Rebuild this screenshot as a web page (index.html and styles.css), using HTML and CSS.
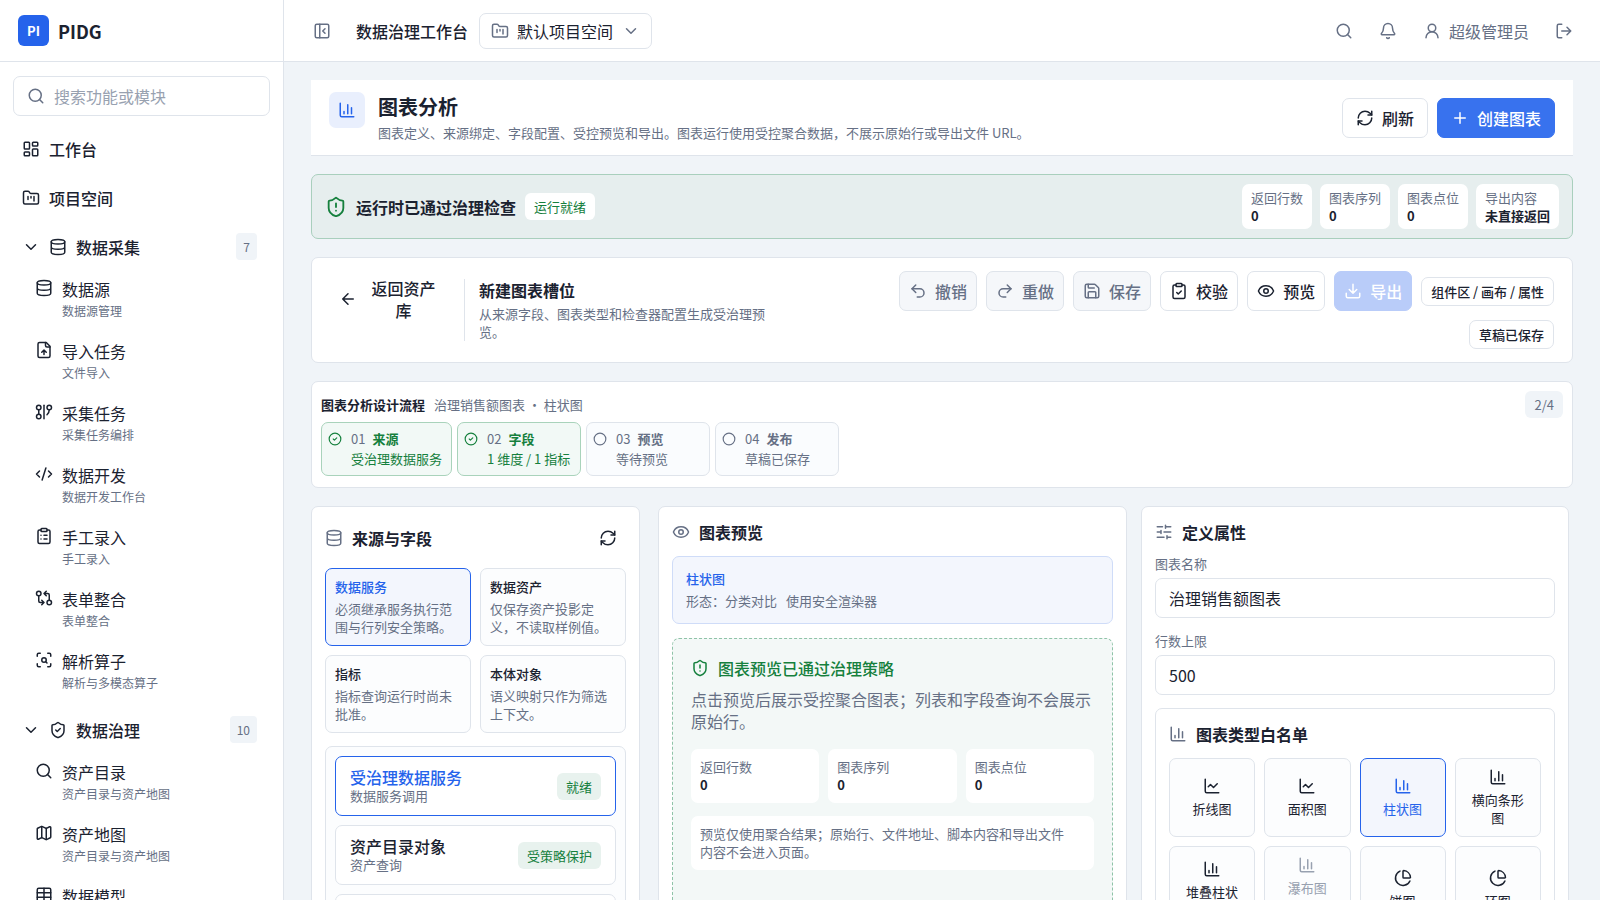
FILE: index.html
```
<!DOCTYPE html>
<html lang="zh-CN">
<head>
<meta charset="utf-8">
<title>图表分析 - PIDG</title>
<link rel="stylesheet" href="styles.css">
</head>
<body>
	<!-- 图标 -->
	<svg class="sprite" aria-hidden="true">
		<symbol id="i-dashboard" viewBox="0 0 24 24"><rect x="3" y="3" width="7" height="9" rx="1"/><rect x="14" y="3" width="7" height="5" rx="1"/><rect x="14" y="12" width="7" height="9" rx="1"/><rect x="3" y="16" width="7" height="5" rx="1"/></symbol>
		<symbol id="i-folder" viewBox="0 0 24 24"><path d="M4 20h16a2 2 0 0 0 2-2V8a2 2 0 0 0-2-2h-7.93a2 2 0 0 1-1.66-.9l-.82-1.2A2 2 0 0 0 7.93 3H4a2 2 0 0 0-2 2v13c0 1.1.9 2 2 2Z"/><path d="M8 10v4M12 10v2M16 10v6"/></symbol>
		<symbol id="i-database" viewBox="0 0 24 24"><ellipse cx="12" cy="5" rx="9" ry="3"/><path d="M3 5v14a9 3 0 0 0 18 0V5M3 12a9 3 0 0 0 18 0"/></symbol>
		<symbol id="i-file-up" viewBox="0 0 24 24"><path d="M15 2H6a2 2 0 0 0-2 2v16a2 2 0 0 0 2 2h12a2 2 0 0 0 2-2V7Z"/><path d="M14 2v4a2 2 0 0 0 2 2h4M12 12v6M15 15l-3-3-3 3"/></symbol>
		<symbol id="i-graph" viewBox="0 0 24 24"><circle cx="5" cy="6" r="3"/><path d="M5 9v6"/><circle cx="5" cy="18" r="3"/><path d="M12 3v18"/><circle cx="19" cy="6" r="3"/><path d="M16 15.7A9 9 0 0 0 19 9"/></symbol>
		<symbol id="i-code" viewBox="0 0 24 24"><path d="m18 16 4-4-4-4M6 8l-4 4 4 4M14.5 4l-5 16"/></symbol>
		<symbol id="i-clip-list" viewBox="0 0 24 24"><rect x="8" y="2" width="8" height="4" rx="1"/><path d="M16 4h2a2 2 0 0 1 2 2v14a2 2 0 0 1-2 2H6a2 2 0 0 1-2-2V6a2 2 0 0 1 2-2h2M12 11h4M12 16h4M8 11h.01M8 16h.01"/></symbol>
		<symbol id="i-clip-check" viewBox="0 0 24 24"><rect x="8" y="2" width="8" height="4" rx="1"/><path d="M16 4h2a2 2 0 0 1 2 2v14a2 2 0 0 1-2 2H6a2 2 0 0 1-2-2V6a2 2 0 0 1 2-2h2M9 14l2 2 4-4"/></symbol>
		<symbol id="i-compare" viewBox="0 0 24 24"><circle cx="5" cy="6" r="3"/><path d="M12 6h5a2 2 0 0 1 2 2v7M15 9l-3-3 3-3"/><circle cx="19" cy="18" r="3"/><path d="M12 18H7a2 2 0 0 1-2-2V9M9 15l3 3-3 3"/></symbol>
		<symbol id="i-scan" viewBox="0 0 24 24"><path d="M3 7V5a2 2 0 0 1 2-2h2M17 3h2a2 2 0 0 1 2 2v2M21 17v2a2 2 0 0 1-2 2h-2M7 21H5a2 2 0 0 1-2-2v-2"/><circle cx="12" cy="12" r="3"/><path d="m16 16-1.9-1.9"/></symbol>
		<symbol id="i-shield-check" viewBox="0 0 24 24"><path d="M20 13c0 5-3.5 7.5-7.66 8.95a1 1 0 0 1-.67-.01C7.5 20.5 4 18 4 13V6a1 1 0 0 1 1-1c2 0 4.5-1.2 6.24-2.72a1.17 1.17 0 0 1 1.52 0C14.51 3.81 17 5 19 5a1 1 0 0 1 1 1z"/><path d="m9 12 2 2 4-4"/></symbol>
		<symbol id="i-shield-alert" viewBox="0 0 24 24"><path d="M20 13c0 5-3.5 7.5-7.66 8.95a1 1 0 0 1-.67-.01C7.5 20.5 4 18 4 13V6a1 1 0 0 1 1-1c2 0 4.5-1.2 6.24-2.72a1.17 1.17 0 0 1 1.52 0C14.51 3.81 17 5 19 5a1 1 0 0 1 1 1z"/><path d="M12 8v4M12 16h.01"/></symbol>
		<symbol id="i-map" viewBox="0 0 24 24"><path d="M14.106 5.553a2 2 0 0 0 1.788 0l3.659-1.83A1 1 0 0 1 21 4.619v12.764a1 1 0 0 1-.553.894l-4.553 2.277a2 2 0 0 1-1.788 0l-4.212-2.106a2 2 0 0 0-1.788 0l-3.659 1.83A1 1 0 0 1 3 19.381V6.618a1 1 0 0 1 .553-.894l4.553-2.277a2 2 0 0 1 1.788 0z"/><path d="M15 5.764v15M9 3.236v15"/></symbol>
		<symbol id="i-table" viewBox="0 0 24 24"><rect x="3" y="3" width="18" height="18" rx="2"/><path d="M12 3v18M3 9h18M3 15h18"/></symbol>
		<symbol id="i-search" viewBox="0 0 24 24"><circle cx="11" cy="11" r="8"/><path d="m21 21-4.3-4.3"/></symbol>
		<symbol id="i-down" viewBox="0 0 24 24"><path d="m6 9 6 6 6-6"/></symbol>
		<symbol id="i-panel" viewBox="0 0 24 24"><rect x="3" y="3" width="18" height="18" rx="2"/><path d="M9 3v18M16 15l-3-3 3-3"/></symbol>
		<symbol id="i-bell" viewBox="0 0 24 24"><path d="M10.268 21a2 2 0 0 0 3.464 0"/><path d="M3.262 15.326A1 1 0 0 0 4 17h16a1 1 0 0 0 .74-1.673C19.41 13.956 18 12.499 18 8A6 6 0 0 0 6 8c0 4.499-1.411 5.956-2.738 7.326"/></symbol>
		<symbol id="i-user" viewBox="0 0 24 24"><circle cx="12" cy="8" r="5"/><path d="M20 21a8 8 0 0 0-16 0"/></symbol>
		<symbol id="i-logout" viewBox="0 0 24 24"><path d="M9 21H5a2 2 0 0 1-2-2V5a2 2 0 0 1 2-2h4M16 17l5-5-5-5M21 12H9"/></symbol>
		<symbol id="i-bars" viewBox="0 0 24 24"><path d="M3 3v16a2 2 0 0 0 2 2h16M18 17V9M13 17V5M8 17v-3"/></symbol>
		<symbol id="i-line" viewBox="0 0 24 24"><path d="M3 3v16a2 2 0 0 0 2 2h16M19 9l-5 5-4-4-3 3"/></symbol>
		<symbol id="i-pie" viewBox="0 0 24 24"><path d="M21 12c.552 0 1.005-.449.95-.998a10 10 0 0 0-8.953-8.951c-.55-.055-.998.398-.998.95v8a1 1 0 0 0 1 1z"/><path d="M21.21 15.89A10 10 0 1 1 8 2.83"/></symbol>
		<symbol id="i-refresh" viewBox="0 0 24 24"><path d="M3 12a9 9 0 0 1 9-9 9.75 9.75 0 0 1 6.74 2.74L21 8"/><path d="M21 3v5h-5M21 12a9 9 0 0 1-9 9 9.75 9.75 0 0 1-6.74-2.74L3 16"/><path d="M8 16H3v5"/></symbol>
		<symbol id="i-plus" viewBox="0 0 24 24"><path d="M5 12h14M12 5v14"/></symbol>
		<symbol id="i-back" viewBox="0 0 24 24"><path d="m12 19-7-7 7-7M19 12H5"/></symbol>
		<symbol id="i-undo" viewBox="0 0 24 24"><path d="M9 14 4 9l5-5"/><path d="M4 9h10.5a5.5 5.5 0 0 1 0 11H11"/></symbol>
		<symbol id="i-redo" viewBox="0 0 24 24"><path d="m15 14 5-5-5-5"/><path d="M20 9H9.5a5.5 5.5 0 0 0 0 11H13"/></symbol>
		<symbol id="i-save" viewBox="0 0 24 24"><path d="M15.2 3a2 2 0 0 1 1.4.6l3.8 3.8a2 2 0 0 1 .6 1.4V19a2 2 0 0 1-2 2H5a2 2 0 0 1-2-2V5a2 2 0 0 1 2-2z"/><path d="M17 21v-7a1 1 0 0 0-1-1H8a1 1 0 0 0-1 1v7M7 3v4a1 1 0 0 0 1 1h7"/></symbol>
		<symbol id="i-eye" viewBox="0 0 24 24"><path d="M2.062 12.348a1 1 0 0 1 0-.696 10.75 10.75 0 0 1 19.876 0 1 1 0 0 1 0 .696 10.75 10.75 0 0 1-19.876 0"/><circle cx="12" cy="12" r="3"/></symbol>
		<symbol id="i-download" viewBox="0 0 24 24"><path d="M21 15v4a2 2 0 0 1-2 2H5a2 2 0 0 1-2-2v-4M7 10l5 5 5-5M12 15V3"/></symbol>
		<symbol id="i-sliders" viewBox="0 0 24 24"><path d="M10 5H3M12 19H3M14 3v4M16 17v4M21 12h-9M21 19h-5M21 5h-7M8 10v4M8 12H3"/></symbol>
		<symbol id="i-done" viewBox="0 0 24 24"><circle cx="12" cy="12" r="10"/><path d="m9 12 2 2 4-4"/></symbol>
		<symbol id="i-circle" viewBox="0 0 24 24"><circle cx="12" cy="12" r="10"/></symbol>
	</svg>

	<div class="app">
		<aside class="sidebar">
			<div class="brand"><span class="logo">PI</span><b>PIDG</b></div>
			<label class="search">
				<svg class="icon"><use href="#i-search"/></svg>
				<input type="search" placeholder="搜索功能或模块" aria-label="搜索功能或模块">
			</label>
			<nav class="nav">
				<a class="nav-item" href="#"><svg class="icon"><use href="#i-dashboard"/></svg>工作台</a>
				<a class="nav-item" href="#"><svg class="icon"><use href="#i-folder"/></svg>项目空间</a>
				<div class="nav-group">
					<button class="nav-item" type="button"><svg class="icon"><use href="#i-down"/></svg><svg class="icon"><use href="#i-database"/></svg>数据采集<span class="count">7</span></button>
					<a class="nav-child" href="#"><svg class="icon"><use href="#i-database"/></svg><span>数据源<small>数据源管理</small></span></a>
					<a class="nav-child" href="#"><svg class="icon"><use href="#i-file-up"/></svg><span>导入任务<small>文件导入</small></span></a>
					<a class="nav-child" href="#"><svg class="icon"><use href="#i-graph"/></svg><span>采集任务<small>采集任务编排</small></span></a>
					<a class="nav-child" href="#"><svg class="icon"><use href="#i-code"/></svg><span>数据开发<small>数据开发工作台</small></span></a>
					<a class="nav-child" href="#"><svg class="icon"><use href="#i-clip-list"/></svg><span>手工录入<small>手工录入</small></span></a>
					<a class="nav-child" href="#"><svg class="icon"><use href="#i-compare"/></svg><span>表单整合<small>表单整合</small></span></a>
					<a class="nav-child" href="#"><svg class="icon"><use href="#i-scan"/></svg><span>解析算子<small>解析与多模态算子</small></span></a>
				</div>
				<div class="nav-group">
					<button class="nav-item" type="button"><svg class="icon"><use href="#i-down"/></svg><svg class="icon"><use href="#i-shield-check"/></svg>数据治理<span class="count">10</span></button>
					<a class="nav-child" href="#"><svg class="icon"><use href="#i-search"/></svg><span>资产目录<small>资产目录与资产地图</small></span></a>
					<a class="nav-child" href="#"><svg class="icon"><use href="#i-map"/></svg><span>资产地图<small>资产目录与资产地图</small></span></a>
					<a class="nav-child" href="#"><svg class="icon"><use href="#i-table"/></svg><span>数据模型<small>数据模型</small></span></a>
				</div>
			</nav>
		</aside>

		<div class="main">
			<header class="topbar">
				<button class="icon-btn" type="button" aria-label="收起侧栏"><svg class="icon"><use href="#i-panel"/></svg></button>
				<span class="topbar-title">数据治理工作台</span>
				<label class="space">
					<svg class="icon"><use href="#i-folder"/></svg>
					<select aria-label="项目空间"><option>默认项目空间</option></select>
					<svg class="icon"><use href="#i-down"/></svg>
				</label>
				<div class="tools">
					<button class="icon-btn" type="button" aria-label="搜索"><svg class="icon"><use href="#i-search"/></svg></button>
					<button class="icon-btn" type="button" aria-label="通知"><svg class="icon"><use href="#i-bell"/></svg></button>
					<button class="icon-btn" type="button"><svg class="icon"><use href="#i-user"/></svg>超级管理员</button>
					<button class="icon-btn" type="button" aria-label="退出"><svg class="icon"><use href="#i-logout"/></svg></button>
				</div>
			</header>

			<main class="content">
				<section class="page-head">
					<span class="page-icon"><svg class="icon"><use href="#i-bars"/></svg></span>
					<div class="page-text">
						<h1>图表分析</h1>
						<p>图表定义、来源绑定、字段配置、受控预览和导出。图表运行使用受控聚合数据，不展示原始行或导出文件 URL。</p>
					</div>
					<button class="btn wide" type="button"><svg class="icon"><use href="#i-refresh"/></svg>刷新</button>
					<button class="btn wide primary" type="button"><svg class="icon"><use href="#i-plus"/></svg>创建图表</button>
				</section>

				<section class="banner">
					<svg class="icon big"><use href="#i-shield-alert"/></svg>
					<h2>运行时已通过治理检查</h2>
					<span class="tag white">运行就绪</span>
					<dl class="stats">
						<div><dt>返回行数</dt><dd>0</dd></div>
						<div><dt>图表序列</dt><dd>0</dd></div>
						<div><dt>图表点位</dt><dd>0</dd></div>
						<div><dt>导出内容</dt><dd>未直接返回</dd></div>
					</dl>
				</section>

				<section class="card toolbar">
					<div class="slot">
						<button class="back" type="button"><svg class="icon"><use href="#i-back"/></svg><span>返回资产库</span></button>
						<div class="slot-text">
							<h2>新建图表槽位</h2>
							<p>从来源字段、图表类型和检查器配置生成受治理预览。</p>
						</div>
					</div>
					<div class="actions">
						<button class="btn" type="button" disabled><svg class="icon"><use href="#i-undo"/></svg>撤销</button>
						<button class="btn" type="button" disabled><svg class="icon"><use href="#i-redo"/></svg>重做</button>
						<button class="btn" type="button" disabled><svg class="icon"><use href="#i-save"/></svg>保存</button>
						<button class="btn" type="button"><svg class="icon"><use href="#i-clip-check"/></svg>校验</button>
						<button class="btn" type="button"><svg class="icon"><use href="#i-eye"/></svg>预览</button>
						<button class="btn primary" type="button" disabled><svg class="icon"><use href="#i-download"/></svg>导出</button>
						<span class="pill">组件区 / 画布 / 属性</span>
						<span class="pill">草稿已保存</span>
					</div>
				</section>

				<section class="card flow">
					<div class="flow-head">
						<h3>图表分析设计流程</h3>
						<span>治理销售额图表 ・ 柱状图</span>
						<span class="tag gray">2/4</span>
					</div>
					<ol class="steps">
						<li class="done"><svg class="icon small"><use href="#i-done"/></svg><div><i>01</i><b>来源</b><p>受治理数据服务</p></div></li>
						<li class="done"><svg class="icon small"><use href="#i-done"/></svg><div><i>02</i><b>字段</b><p>1 维度 / 1 指标</p></div></li>
						<li><svg class="icon small"><use href="#i-circle"/></svg><div><i>03</i><b>预览</b><p>等待预览</p></div></li>
						<li><svg class="icon small"><use href="#i-circle"/></svg><div><i>04</i><b>发布</b><p>草稿已保存</p></div></li>
					</ol>
				</section>

				<div class="workspace">
					<section class="card panel side">
						<div class="panel-title tall">
							<svg class="icon"><use href="#i-database"/></svg>
							<h2>来源与字段</h2>
							<button class="icon-btn dark" type="button" aria-label="刷新来源"><svg class="icon"><use href="#i-refresh"/></svg></button>
						</div>
						<div class="sources">
							<button class="source active" type="button"><b>数据服务</b><span>必须继承服务执行范围与行列安全策略。</span></button>
							<button class="source" type="button"><b>数据资产</b><span>仅保存资产投影定义，不读取样例值。</span></button>
							<button class="source" type="button"><b>指标</b><span>指标查询运行时尚未批准。</span></button>
							<button class="source" type="button"><b>本体对象</b><span>语义映射只作为筛选上下文。</span></button>
						</div>
						<div class="objects">
							<button class="object active" type="button"><span>受治理数据服务<small>数据服务调用</small></span><em class="tag green">就绪</em></button>
							<button class="object" type="button"><span>资产目录对象<small>资产查询</small></span><em class="tag green">受策略保护</em></button>
							<button class="object" type="button"><span>指标对象<small>指标查询</small></span><em class="tag green">受策略保护</em></button>
						</div>
					</section>

					<section class="card panel preview">
						<div class="panel-title">
							<svg class="icon"><use href="#i-eye"/></svg>
							<h2>图表预览</h2>
						</div>
						<div class="shape">
							<b>柱状图</b>
							<p><span>形态：分类对比</span><span>使用安全渲染器</span></p>
						</div>
						<div class="canvas">
							<h3><svg class="icon"><use href="#i-shield-alert"/></svg>图表预览已通过治理策略</h3>
							<p>点击预览后展示受控聚合图表；列表和字段查询不会展示原始行。</p>
							<dl class="stats">
								<div><dt>返回行数</dt><dd>0</dd></div>
								<div><dt>图表序列</dt><dd>0</dd></div>
								<div><dt>图表点位</dt><dd>0</dd></div>
							</dl>
							<div class="note">预览仅使用聚合结果；原始行、文件地址、脚本内容和导出文件内容不会进入页面。</div>
						</div>
					</section>

					<section class="card panel side">
						<div class="panel-title">
							<svg class="icon"><use href="#i-sliders"/></svg>
							<h2>定义属性</h2>
						</div>
						<div class="field">
							<label for="chart-name">图表名称</label>
							<input id="chart-name" type="text" value="治理销售额图表">
						</div>
						<div class="field">
							<label for="row-limit">行数上限</label>
							<input id="row-limit" type="text" inputmode="numeric" value="500">
						</div>
						<div class="types">
							<div class="panel-title">
								<svg class="icon"><use href="#i-bars"/></svg>
								<h2>图表类型白名单</h2>
							</div>
							<div class="type-grid">
								<button class="type" type="button"><svg class="icon"><use href="#i-line"/></svg>折线图</button>
								<button class="type" type="button"><svg class="icon"><use href="#i-line"/></svg>面积图</button>
								<button class="type active" type="button"><svg class="icon"><use href="#i-bars"/></svg>柱状图</button>
								<button class="type" type="button"><svg class="icon"><use href="#i-bars"/></svg>横向条形图</button>
								<button class="type" type="button"><svg class="icon"><use href="#i-bars"/></svg>堆叠柱状图</button>
								<button class="type" type="button" disabled><svg class="icon"><use href="#i-bars"/></svg>瀑布图<small>未启用</small></button>
								<button class="type" type="button"><svg class="icon"><use href="#i-pie"/></svg>饼图</button>
								<button class="type" type="button"><svg class="icon"><use href="#i-pie"/></svg>环图</button>
							</div>
						</div>
					</section>
				</div>
			</main>
		</div>
	</div>
</body>
</html>
```
FILE: styles.css
```
*{
	box-sizing: border-box;
	margin: 0;
	padding: 0;
}
body{
	font-family: "Noto Sans CJK SC", sans-serif;
	font-size: 16px;
	line-height: 22px;
	color: #1b2230;
	background: #f0f4f8;
}
button, input, select{
	font: inherit;
	color: inherit;
	background: none;
	border: 0;
	outline: 0;
}
button{
	cursor: pointer;
}
a{
	color: inherit;
	text-decoration: none;
}
h1, h2, h3, b, dd{
	font-weight: 600;
}
h2{
	font-size: 16px;
}
i, em{
	font-style: normal;
}
.sprite{
	display: none;
}
.icon{
	width: 18px;
	height: 18px;
	flex: none;
	fill: none;
	stroke: currentColor;
	stroke-width: 2;
	stroke-linecap: round;
	stroke-linejoin: round;
}
.icon.big{
	width: 22px;
	height: 22px;
}
.icon.small{
	width: 14px;
	height: 14px;
}
.app{
	display: flex;
	height: 100vh;
	overflow: hidden;
}

/* 侧栏 */
.sidebar{
	width: 284px;
	flex: none;
	display: flex;
	flex-direction: column;
	background: #fff;
	border-right: 1px solid #dfe4eb;
}
.brand{
	height: 62px;
	flex: none;
	display: flex;
	align-items: center;
	gap: 9px;
	padding: 0 18px;
	border-bottom: 1px solid #dfe4eb;
	font-size: 18px;
}
.logo{
	width: 31px;
	height: 31px;
	border-radius: 6px;
	background: #2563eb;
	color: #fff;
	font-size: 13px;
	font-weight: 600;
	line-height: 31px;
	text-align: center;
}
.search{
	height: 40px;
	flex: none;
	display: flex;
	align-items: center;
	gap: 9px;
	margin: 14px 13px 10px;
	padding: 0 13px;
	border: 1px solid #dfe4eb;
	border-radius: 7px;
	color: #667085;
}
.search input{
	flex: 1;
	min-width: 0;
}
.search input::placeholder{
	color: #98a1b0;
}
.nav{
	flex: 1;
	min-height: 0;
	display: flex;
	flex-direction: column;
	gap: 4px;
	padding: 0 13px;
	overflow-y: auto;
	scrollbar-width: none;
}
.nav-item{
	width: 100%;
	height: 45px;
	flex: none;
	display: flex;
	align-items: center;
	gap: 9px;
	padding: 0 13px 0 9px;
	font-weight: 500;
}
.count{
	margin-left: auto;
	padding: 0 7px;
	border-radius: 4px;
	background: #f0f4f8;
	color: #667085;
	font-size: 12px;
	font-weight: 400;
	line-height: 27px;
}
.nav-child{
	height: 58px;
	display: flex;
	gap: 9px;
	margin-bottom: 4px;
	padding: 9px 9px 9px 22px;
}
.nav-child .icon{
	margin-top: 1px;
}
.nav-child small{
	display: block;
	color: #667085;
	font-size: 12px;
	line-height: 22px;
}

/* 顶栏 */
.main{
	flex: 1;
	min-width: 0;
	display: flex;
	flex-direction: column;
}
.topbar{
	height: 62px;
	flex: none;
	display: flex;
	align-items: center;
	padding: 0 18px 0 20px;
	background: #fff;
	border-bottom: 1px solid #dfe4eb;
}
.icon-btn{
	height: 36px;
	display: flex;
	align-items: center;
	gap: 9px;
	padding: 0 9px;
	color: #667085;
}
.icon-btn.dark{
	color: #1b2230;
}
.tools .icon-btn{
	gap: 8px;
}
.topbar-title{
	margin: 0 11px 0 16px;
	font-weight: 500;
}
.space{
	height: 36px;
	display: flex;
	align-items: center;
	gap: 8px;
	padding: 0 11px;
	border: 1px solid #dfe4eb;
	border-radius: 7px;
	color: #667085;
}
.space select{
	appearance: none;
	color: #1b2230;
}
.tools{
	display: flex;
	gap: 8px;
	margin-left: auto;
}

/* 内容 */
.content{
	flex: 1;
	min-height: 0;
	display: flex;
	flex-direction: column;
	gap: 18px;
	padding: 18px 27px;
	overflow-y: auto;
	scrollbar-width: none;
}
.content > *{
	flex: none;
}
.card{
	background: #fff;
	border: 1px solid #dfe4eb;
	border-radius: 7px;
}
.page-head{
	display: flex;
	align-items: center;
	gap: 9px;
	padding: 12px 18px;
	background: #fff;
	border-bottom: 1px solid #dfe4eb;
}
.page-icon{
	width: 36px;
	height: 36px;
	display: flex;
	align-items: center;
	justify-content: center;
	align-self: flex-start;
	margin-right: 4px;
	border-radius: 7px;
	background: #e9effd;
	color: #2563eb;
}
.page-text{
	flex: 1;
}
.page-text h1{
	font-size: 20px;
	line-height: 30px;
}
.page-text p{
	color: #667085;
	font-size: 13px;
	line-height: 21px;
}
.btn{
	height: 40px;
	display: flex;
	align-items: center;
	gap: 8px;
	padding: 0 9px;
	border: 1px solid #dfe4eb;
	border-radius: 7px;
	background: #fff;
	font-weight: 500;
	white-space: nowrap;
}
.btn.wide{
	padding: 0 13px;
}
.btn:disabled{
	background: #f5f7fa;
	color: #667085;
}
.btn.primary{
	border-color: #3872ee;
	background: #3872ee;
	color: #fff;
}
.btn.primary:disabled{
	border-color: #b9ccf9;
	background: #b9ccf9;
}
.tag{
	padding: 0 9px;
	border-radius: 6px;
	font-size: 13px;
	line-height: 27px;
	white-space: nowrap;
}
.tag.white{
	background: #fff;
	color: #15803d;
}
.tag.gray{
	background: #f0f4f8;
	color: #667085;
}
.tag.green{
	background: #e8f2ee;
	color: #15803d;
}
.banner{
	display: flex;
	align-items: center;
	gap: 9px;
	padding: 9px 13px;
	border: 1px solid #a9cfbd;
	border-radius: 7px;
	background: #e6eeee;
}
.banner > .icon{
	color: #15803d;
}
.stats{
	display: flex;
	gap: 8px;
	font-size: 13px;
	line-height: 18px;
}
.stats div{
	padding: 5px 9px 4px;
	border-radius: 7px;
	background: #fff;
}
.stats dt{
	color: #667085;
}
.banner .stats{
	margin-left: auto;
}
.toolbar{
	display: flex;
	align-items: center;
	justify-content: space-between;
	padding: 13px 18px 13px 14px;
}
.slot{
	display: flex;
	align-items: flex-start;
}
.back{
	width: 124px;
	height: 40px;
	display: flex;
	align-items: center;
	gap: 13px;
	margin-right: 14px;
	padding: 0 13px;
	font-weight: 500;
}
.slot-text{
	max-width: 310px;
	padding-left: 14px;
	border-left: 1px solid #dfe4eb;
}
.slot-text h2{
	margin-bottom: 4px;
}
.slot-text p{
	color: #667085;
	font-size: 13px;
	line-height: 18px;
}
.actions{
	flex: 0 1 670px;
	display: flex;
	flex-wrap: wrap;
	align-items: center;
	justify-content: flex-end;
	gap: 9px;
}
.pill{
	padding: 0 9px;
	border: 1px solid #dfe4eb;
	border-radius: 7px;
	font-size: 13px;
	font-weight: 500;
	line-height: 27px;
}
.flow{
	padding: 9px 9px 11px;
}
.flow-head{
	display: flex;
	align-items: center;
	gap: 9px;
	margin-bottom: 4px;
	color: #667085;
	font-size: 13px;
}
.flow-head h3{
	color: #1b2230;
	font-size: 13px;
}
.flow-head .tag{
	margin-left: auto;
}
.steps{
	display: flex;
	gap: 5px;
	list-style: none;
}
.steps li{
	min-width: 124px;
	display: flex;
	gap: 9px;
	padding: 6px 9px 6px 6px;
	border: 1px solid #dfe4eb;
	border-radius: 7px;
	background: #fafcfe;
	color: #667085;
	font-size: 13px;
	line-height: 20px;
}
.steps .icon{
	margin-top: 3px;
}
.steps i{
	margin-right: 7px;
	color: #667085;
}
.steps .done{
	border-color: #a9d3bb;
	background: #f2f9f6;
	color: #15803d;
}

/* 工作区三栏 */
.workspace{
	display: grid;
	grid-template-columns: 333fr 469fr 432fr;
	gap: 14px;
}
.panel{
	min-width: 0;
	padding: 12px 13px 13px;
}
.side{
	margin-right: 4px;
}
.panel-title{
	display: flex;
	align-items: center;
	gap: 9px;
	margin-bottom: 11px;
	line-height: 26px;
}
.panel-title > .icon{
	color: #667085;
}
.panel-title .icon-btn{
	margin-left: auto;
}
.panel-title.tall{
	height: 38px;
}
.sources{
	display: grid;
	grid-template-columns: 1fr 1fr;
	gap: 9px;
	margin-bottom: 13px;
}
.source{
	padding: 9px;
	border: 1px solid #dfe4eb;
	border-radius: 7px;
	background: #fcfdfe;
	font-size: 13px;
	line-height: 18px;
	text-align: left;
}
.source b{
	display: block;
	margin-bottom: 4px;
	font-weight: 500;
}
.source span{
	display: block;
	color: #667085;
}
.source.active{
	border-color: #2563eb;
	background: #f3f6fd;
}
.active b{
	color: #2563eb;
}
.objects{
	display: flex;
	flex-direction: column;
	gap: 9px;
	padding: 9px;
	border: 1px solid #dfe4eb;
	border-radius: 7px;
	background: #fcfdfe;
}
.object{
	height: 60px;
	display: flex;
	align-items: center;
	justify-content: space-between;
	padding: 0 14px;
	border: 1px solid #dfe4eb;
	border-radius: 7px;
	background: #fff;
	font-weight: 500;
	line-height: 20px;
	text-align: left;
}
.object small{
	display: block;
	color: #667085;
	font-size: 13px;
	font-weight: 400;
	line-height: 18px;
}
.object em{
	font-weight: 400;
}
.object.active{
	border-color: #2563eb;
	color: #2563eb;
}
.preview{
	display: flex;
	flex-direction: column;
}
.shape{
	margin-bottom: 14px;
	padding: 11px 13px;
	border: 1px solid #cfdcf8;
	border-radius: 7px;
	background: #f3f6fd;
	font-size: 13px;
}
.shape b{
	color: #2563eb;
	font-weight: 500;
}
.shape p{
	display: flex;
	gap: 9px;
	color: #667085;
}
.canvas{
	flex: 1;
	padding: 18px;
	border: 1px dashed #8fc3a8;
	border-radius: 7px;
	background: #f3f8f7;
}
.canvas h3{
	display: flex;
	align-items: center;
	gap: 9px;
	margin-bottom: 9px;
	color: #15803d;
	font-size: 16px;
	font-weight: 500;
}
.canvas > p{
	margin-bottom: 17px;
	color: #667085;
}
.canvas .stats{
	gap: 9px;
	margin-bottom: 13px;
}
.canvas .stats div{
	flex: 1;
	padding: 9px;
}
.note{
	padding: 9px 18px 9px 9px;
	border-radius: 7px;
	background: #fff;
	color: #667085;
	font-size: 13px;
	line-height: 18px;
}
.side > .panel-title:not(.tall){
	margin-bottom: 9px;
}
.field{
	margin-bottom: 13px;
}
.field label{
	display: block;
	margin-bottom: 5px;
	color: #667085;
	font-size: 13px;
	line-height: 19px;
}
.field input{
	width: 100%;
	height: 40px;
	padding: 0 13px;
	border: 1px solid #dfe4eb;
	border-radius: 7px;
}
.types{
	padding: 12px 13px 13px;
	border: 1px solid #dfe4eb;
	border-radius: 7px;
}
.type-grid{
	display: grid;
	grid-template-columns: repeat(4, 1fr);
	gap: 9px;
}
.type{
	min-height: 79px;
	display: flex;
	flex-direction: column;
	align-items: center;
	justify-content: center;
	gap: 5px;
	padding: 9px 12px;
	border: 1px solid #dfe4eb;
	border-radius: 7px;
	background: #fcfdfe;
	font-size: 13px;
	line-height: 18px;
}
.type small{
	font-size: 12px;
	line-height: 21px;
}
.type:disabled{
	color: #98a1b0;
}
.type.active{
	border-color: #2563eb;
	background: #f3f6fd;
	color: #2563eb;
}
```
